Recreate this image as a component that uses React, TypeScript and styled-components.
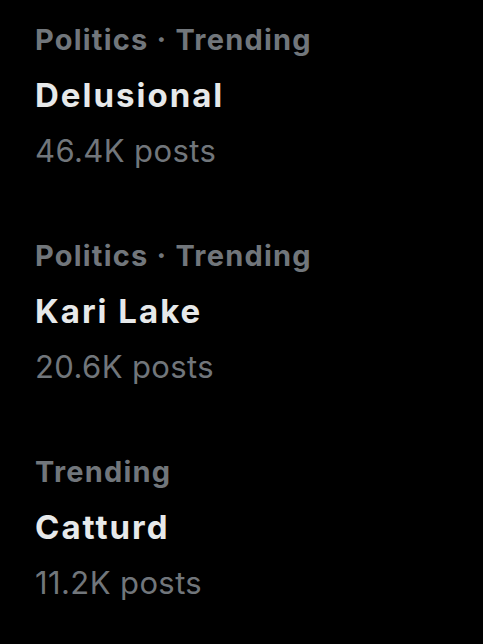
import React from 'react';
import styled, { createGlobalStyle } from 'styled-components';

type Trend = {
  category: string;
  title: string;
  posts: string;
};

const trends: Trend[] = [
  { category: 'Politics · Trending', title: 'Delusional', posts: '46.4K posts' },
  { category: 'Politics · Trending', title: 'Kari Lake', posts: '20.6K posts' },
  { category: 'Trending', title: 'Catturd', posts: '11.2K posts' },
];

const GlobalStyle = createGlobalStyle`
  html, body {
    margin: 0;
    padding: 0;
    background: #000;
  }
  body {
    font-family: Inter, 'Liberation Sans', sans-serif;
    -webkit-font-smoothing: antialiased;
  }
`;

const Page = styled.div`
  width: 483px;
  height: 644px;
  background: #000;
  padding: 11px 0 0 35px;
  box-sizing: border-box;
  display: flex;
  flex-direction: column;
  gap: 48px;
  overflow: hidden;
`;

const Item = styled.div`
  display: flex;
  flex-direction: column;
`;

const Category = styled.div`
  color: #71767b;
  font-size: 29px;
  font-weight: 700;
  letter-spacing: 1.2px;
  line-height: 57px;
`;

const Title = styled.div`
  color: #e7e9ea;
  font-size: 33px;
  font-weight: 700;
  letter-spacing: 2px;
  line-height: 55px;
`;

const Posts = styled.div`
  color: #71767b;
  font-size: 31px;
  font-weight: 400;
  letter-spacing: 0.4px;
  line-height: 56px;
`;

const App = () => {
  return (
    <>
      <GlobalStyle />
      <Page>
        {trends.map((t) => (
          <Item key={t.title}>
            <Category>{t.category}</Category>
            <Title>{t.title}</Title>
            <Posts>{t.posts}</Posts>
          </Item>
        ))}
      </Page>
    </>
  );
};

export default App;
